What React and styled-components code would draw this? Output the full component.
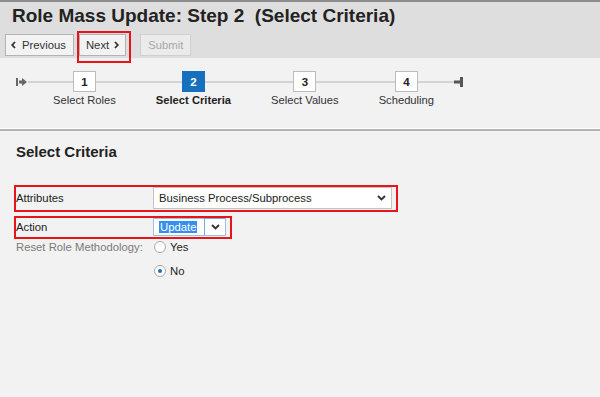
import React from "react";
import styled, { createGlobalStyle } from "styled-components";

const GlobalStyle = createGlobalStyle`
  html, body { margin: 0; padding: 0; }
  body {
    background: #f2f2f2;
    font-family: "Liberation Sans", Arial, sans-serif;
    color: #333;
  }
`;

const Page = styled.div`
  width: 600px;
  min-height: 397px;
  background: #f2f2f2;
`;

const Header = styled.header`
  border-top: 2px solid #8c8c8c;
  background: #dedede;
  padding: 3px 0 2px;
`;

const Title = styled.h1`
  margin: 0;
  padding-left: 12px;
  font-size: 19px;
  font-weight: bold;
  color: #222;
  line-height: 22px;
  white-space: pre;
`;

const Toolbar = styled.div`
  display: flex;
  align-items: center;
  padding: 7px 0 0 5px;
`;

const Button = styled.button`
  box-sizing: border-box;
  display: inline-flex;
  align-items: center;
  gap: ${(p) => p.$gap || 0}px;
  height: 22px;
  padding: 0 ${(p) => p.$pr ?? 7}px 0 ${(p) => p.$pl ?? 7}px;
  margin: 0;
  margin-left: ${(p) => p.$ml || 0}px;
  font-family: "Liberation Sans", Arial, sans-serif;
  font-size: 11.3px;
  color: ${(p) => (p.disabled ? "#a8a8a8" : "#333")};
  background: ${(p) => (p.disabled ? "#ebebeb" : "#f3f3f3")};
  border: 1px solid ${(p) => (p.disabled ? "#cfcfcf" : "#b3b3b3")};
  border-radius: 0;
  cursor: default;
`;

const Marked = styled.span`
  position: relative;
  display: inline-flex;
  margin-left: ${(p) => p.$ml || 0}px;
  &::after {
    content: "";
    position: absolute;
    left: -2px;
    right: -5px;
    top: -3px;
    bottom: -7px;
    border: 2px solid #e8141c;
    pointer-events: none;
  }
`;

const Stepper = styled.div`
  display: flex;
  align-items: flex-start;
  padding: 13px 0 21px 16px;
`;

const Cap = styled.div`
  display: flex;
  align-items: center;
  height: 21px;
`;

const CapLine = styled.span`
  display: block;
  width: ${(p) => p.$w}px;
  height: 2px;
  background: #d3d3d3;
`;

const Step = styled.div`
  display: flex;
  flex-direction: column;
  align-items: stretch;
`;

const BoxRow = styled.div`
  display: flex;
  align-items: center;
  height: 21px;
  &::before,
  &::after {
    content: "";
    flex: 1;
    height: 2px;
    background: #d3d3d3;
  }
`;

const StepBox = styled.div`
  box-sizing: border-box;
  width: 23px;
  height: 21px;
  display: flex;
  align-items: center;
  justify-content: center;
  font-size: 11.5px;
  font-weight: bold;
  color: ${(p) => (p.$active ? "#fff" : "#222")};
  background: ${(p) => (p.$active ? "#1670be" : "#fff")};
  border: 1px solid ${(p) => (p.$active ? "#1670be" : "#bcbcbc")};
`;

const StepLabel = styled.div`
  margin-top: 1px;
  padding: 0 20px;
  text-align: center;
  white-space: nowrap;
  font-size: 11.2px;
  line-height: 14px;
  font-weight: ${(p) => (p.$active ? "bold" : "normal")};
  color: ${(p) => (p.$active ? "#222" : "#333")};
`;

const Separator = styled.div`
  border-top: 1px solid #ffffff;
  height: 2px;
  background: #b3b3b3;
`;

const Content = styled.main`
  padding: 12px 0 0 14px;
`;

const Heading = styled.h2`
  margin: 0 0 25px 2px;
  font-size: 15px;
  font-weight: bold;
  color: #222;
  line-height: 17px;
`;

const Row = styled.div`
  display: grid;
  grid-template-columns: 137px auto;
  align-items: ${(p) => p.$align || "center"};
  width: fit-content;
  padding: ${(p) => (p.$marked ? "0 4px 1px 0" : "0 4px 0 2px")};
  border: ${(p) => (p.$marked ? "2px solid #e8141c" : "none")};
  margin-top: ${(p) => p.$mt || 0}px;
`;

const Label = styled.div`
  font-size: 11.3px;
  line-height: 16px;
  color: ${(p) => (p.$muted ? "#7a7a7a" : "#222")};
`;

const Select = styled.div`
  box-sizing: border-box;
  display: flex;
  align-items: center;
  width: ${(p) => p.$w}px;
  height: ${(p) => p.$h}px;
  background: #fff;
  border: 1px solid ${(p) => p.$border || "#c4c4c4"};
  font-size: 11.3px;
  color: #222;
`;

const SelectValue = styled.span`
  flex: 1;
  padding-left: 5px;
  white-space: nowrap;
`;

const Highlight = styled.span`
  background: #3390f0;
  color: #fff;
  padding: 0 1px;
  line-height: 14px;
`;

const Arrow = styled.span`
  box-sizing: border-box;
  display: flex;
  align-items: center;
  justify-content: center;
  width: ${(p) => p.$w}px;
  align-self: stretch;
  border-left: ${(p) => (p.$focus ? "1px solid #7aa9db" : "none")};
  border-top: ${(p) => (p.$focus ? "1px solid #7aa9db" : "none")};
  margin-top: ${(p) => (p.$focus ? "-1px" : "0")};
`;

const RadioGroup = styled.div`
  display: flex;
  flex-direction: column;
  gap: 8px;
`;

const Option = styled.label`
  display: flex;
  align-items: center;
  gap: 4px;
  height: 16px;
  padding-left: 1px;
  font-size: 11.3px;
  color: #222;
`;

const Radio = styled.span`
  box-sizing: border-box;
  width: 12px;
  height: 12px;
  border-radius: 50%;
  border: 1px solid #a9a9a9;
  background: #fff;
  display: flex;
  align-items: center;
  justify-content: center;
  &::after {
    content: "";
    width: 4px;
    height: 4px;
    border-radius: 50%;
    background: ${(p) => (p.$checked ? "#1a6fc4" : "transparent")};
  }
`;

const ChevronLeft = () => (
  <svg width="5" height="8" viewBox="0 0 5 8">
    <polyline points="4,1 1.2,4 4,7" fill="none" stroke="#333" strokeWidth="1.8" />
  </svg>
);

const ChevronRight = () => (
  <svg width="5" height="8" viewBox="0 0 5 8">
    <polyline points="1,1 3.8,4 1,7" fill="none" stroke="#333" strokeWidth="1.8" />
  </svg>
);

const ChevronDown = () => (
  <svg width="9" height="6" viewBox="0 0 9 6">
    <polyline points="1,1 4.5,4.5 8,1" fill="none" stroke="#333" strokeWidth="1.9" />
  </svg>
);

const StartIcon = () => (
  <svg width="12" height="8" viewBox="0 0 12 8">
    <rect x="0" y="0" width="2" height="8" fill="#666" />
    <rect x="3" y="2.5" width="3" height="3" fill="#666" />
    <polygon points="6,0 11,4 6,8" fill="#666" />
  </svg>
);

const EndIcon = () => (
  <svg width="9" height="10" viewBox="0 0 9 10">
    <rect x="0" y="3.5" width="7" height="3" fill="#555" />
    <rect x="6" y="0" width="3" height="10" fill="#555" />
  </svg>
);

const steps = [
  { n: 1, label: "Select Roles" },
  { n: 2, label: "Select Criteria", active: true },
  { n: 3, label: "Select Values" },
  { n: 4, label: "Scheduling" },
];

export default function App() {
  return (
    <Page>
      <GlobalStyle />
      <Header>
        <Title>{"Role Mass Update: Step 2  (Select Criteria)"}</Title>
        <Toolbar>
          <Button $pl={5} $pr={7} $gap={6}>
            <ChevronLeft />
            Previous
          </Button>
          <Marked $ml={5}>
            <Button $pl={6} $pr={6} $gap={5}>
              Next
              <ChevronRight />
            </Button>
          </Marked>
          <Button $ml={14} disabled>
            Submit
          </Button>
        </Toolbar>
      </Header>

      <Stepper>
        <Cap>
          <StartIcon />
          <CapLine $w={5} />
        </Cap>
        {steps.map((s) => (
          <Step key={s.n}>
            <BoxRow>
              <StepBox $active={s.active}>{s.n}</StepBox>
            </BoxRow>
            <StepLabel $active={s.active}>{s.label}</StepLabel>
          </Step>
        ))}
        <Cap>
          <EndIcon />
        </Cap>
      </Stepper>
      <Separator />

      <Content>
        <Heading>Select Criteria</Heading>
        <Row $marked>
          <Label>Attributes</Label>
          <Select $w={239} $h={22}>
            <SelectValue>Business Process/Subprocess</SelectValue>
            <Arrow $w={20}>
              <ChevronDown />
            </Arrow>
          </Select>
        </Row>
        <Row $marked $mt={4}>
          <Label>Action</Label>
          <Select $w={73} $h={18} $border="#9fbfe0">
            <SelectValue>
              <Highlight>Update</Highlight>
            </SelectValue>
            <Arrow $w={21} $focus>
              <ChevronDown />
            </Arrow>
          </Select>
        </Row>
        <Row $align="start">
          <Label $muted>Reset Role Methodology:</Label>
          <RadioGroup>
            <Option>
              <Radio />
              Yes
            </Option>
            <Option>
              <Radio $checked />
              No
            </Option>
          </RadioGroup>
        </Row>
      </Content>
    </Page>
  );
}
